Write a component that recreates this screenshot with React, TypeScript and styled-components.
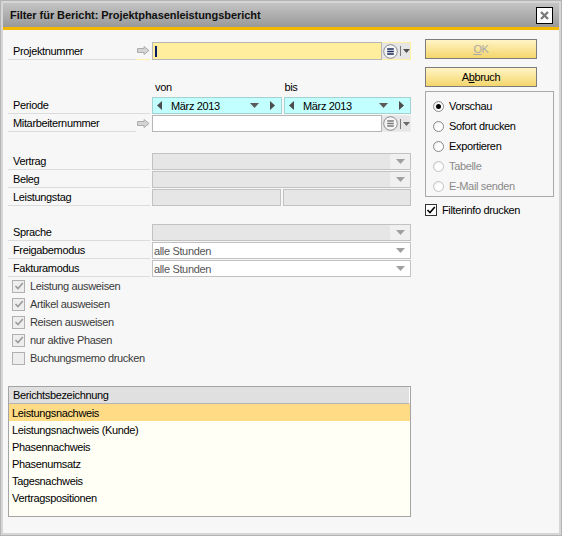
import React from "react";
import styled, { createGlobalStyle } from "styled-components";

const Global = createGlobalStyle`
  html, body { margin: 0; padding: 0; background: #ffffff; }
  body {
    font-family: "Liberation Sans", Arial, sans-serif;
    font-size: 11px;
    letter-spacing: -0.35px;
    color: #000;
  }
  * { box-sizing: border-box; }
`;

const Frame = styled.div`
  width: 562px;
  height: 536px;
  border: 1px solid #b4b4b4;
  padding: 2px;
  background: #d6d6d6;
  display: flex;
  flex-direction: column;
`;

const TitleBar = styled.div`
  flex: none;
  height: 27px;
  background: linear-gradient(#c4c4c4, #999999);
  border-bottom: 3px solid #f5b800;
  display: flex;
  align-items: center;
  justify-content: space-between;
  padding: 0 6px 0 7px;
`;

const Title = styled.div`
  font-weight: bold;
  font-size: 11px;
  letter-spacing: -0.05px;
  color: #101010;
`;

const CloseButton = styled.div`
  width: 17px;
  height: 17px;
  border: 1px solid #000;
  background: #fff;
  display: flex;
  align-items: center;
  justify-content: center;
`;

const Body = styled.div`
  flex: 1;
  background: #f7f7f7;
  display: flex;
  gap: 14px;
  padding: 0 5px;
`;

const LeftColumn = styled.div`
  width: 403px;
  padding-top: 12px;
  display: flex;
  flex-direction: column;
`;

const RightColumn = styled.div`
  width: 129px;
  padding-top: 9px;
  display: flex;
  flex-direction: column;
`;

const FormRow = styled.div<{ $h?: number; $mt?: number }>`
  display: grid;
  grid-template-columns: 144px 1fr;
  height: ${(p) => p.$h ?? 17}px;
  margin-top: ${(p) => p.$mt ?? 0}px;
`;

const LabelCell = styled.div`
  display: flex;
  align-items: stretch;
  padding-right: 2px;
`;

const Label = styled.div`
  flex: 1;
  display: flex;
  align-items: center;
  padding-left: 5px;
  border-bottom: 1px solid #dcdcdc;
  white-space: nowrap;
`;

const ArrowSlot = styled.div<{ $line: string }>`
  width: 14px;
  display: flex;
  align-items: center;
  justify-content: center;
  border-bottom: 1px solid ${(p) => p.$line};
`;

const Lookup = styled.div<{ $focus?: boolean }>`
  display: flex;
  height: 100%;
  background: ${(p) => (p.$focus ? "#fff2ae" : "transparent")};
`;

const TextField = styled.div<{ $bg: string }>`
  flex: 1;
  height: 100%;
  border: 1px solid #b6b6b6;
  background: ${(p) => p.$bg};
  display: flex;
  align-items: center;
  padding-left: 2px;
`;

const Caret = styled.span`
  width: 2px;
  height: 11px;
  background: #0b1a66;
`;

const LookupButtons = styled.div<{ $focus?: boolean }>`
  width: 29px;
  height: 100%;
  display: flex;
  align-items: center;
  gap: 2px;
  padding-left: 1px;
  background: #e6e6e6;
  border: 1px solid ${(p) => (p.$focus ? "#fff0a0" : "#ececec")};
  border-left: none;
`;

const Sep = styled.span`
  width: 1px;
  height: 10px;
  background: #7a7a7a;
`;

const HeaderRow = styled.div`
  display: grid;
  grid-template-columns: 144px 1fr 1fr;
  column-gap: 2px;
  height: 16px;
  margin-top: 19px;
  align-items: center;
`;

const HeaderText = styled.div`
  padding-left: 1px;
`;

const DatePair = styled.div`
  display: grid;
  grid-template-columns: 130px 1fr;
  gap: 2px;
  height: 100%;
`;

const DateBox = styled.div`
  height: 100%;
  border: 1px solid #a4d2d2;
  background: #c2ffff;
  display: flex;
  align-items: center;
  padding: 0 6px 0 4px;
`;

const DateText = styled.span`
  margin-left: 9px;
  flex: 1;
`;

const Spacer = styled.span`
  width: 11px;
`;

const Select = styled.div<{ $bg: string }>`
  height: 100%;
  border: 1px solid #c2c2c2;
  background: ${(p) => p.$bg};
  display: flex;
  align-items: center;
`;

const SelectText = styled.span`
  flex: 1;
  padding-left: 1px;
  color: #555;
`;

const SelectArrow = styled.span<{ $bg: string }>`
  width: 20px;
  height: 100%;
  background: ${(p) => p.$bg};
  display: flex;
  align-items: center;
  justify-content: center;
`;

const BoxPair = styled.div`
  display: grid;
  grid-template-columns: 129px 1fr;
  gap: 2px;
  height: 100%;
`;

const GrayBox = styled.div`
  border: 1px solid #c2c2c2;
  background: #e6e6e6;
  height: 100%;
`;

const CheckRow = styled.div`
  height: 18px;
  display: flex;
  align-items: center;
  padding-left: 4px;
  gap: 5px;
  color: #3a3a3a;
`;

const CheckBox = styled.span<{ $dark?: boolean; $size: number }>`
  width: ${(p) => p.$size}px;
  height: ${(p) => p.$size}px;
  border: 1px solid ${(p) => (p.$dark ? "#333" : "#b0b0b0")};
  background: ${(p) => (p.$dark ? "#fff" : "#eeeeee")};
  display: flex;
  align-items: center;
  justify-content: center;
  flex: none;
`;

const Table = styled.div`
  margin-top: 19px;
  height: 131px;
  border: 1px solid #a4a4a4;
  background: #fffff5;
  display: flex;
  flex-direction: column;
`;

const TableHeader = styled.div`
  height: 17px;
  background: #e0e0e0;
  border-bottom: 1px solid #b4b4b4;
  border-right: 1px solid #ffffff;
  display: flex;
  align-items: center;
  padding-left: 4px;
  flex: none;
`;

const TableRow = styled.div<{ $sel?: boolean }>`
  height: 17px;
  display: flex;
  align-items: center;
  padding-left: 3px;
  background: ${(p) => (p.$sel ? "#fedb84" : "transparent")};
  flex: none;
`;

const Button = styled.div<{ $mt: number; $disabled?: boolean }>`
  width: 112px;
  height: 20px;
  margin-top: ${(p) => p.$mt}px;
  border: 1px solid #7c7c7c;
  background: linear-gradient(#fff5c6, #f5d66c);
  display: flex;
  align-items: center;
  justify-content: center;
  color: ${(p) => (p.$disabled ? "#a8a8a8" : "#000")};
`;

const RadioGroup = styled.div`
  margin-top: 4px;
  border: 1px solid #a8a8a8;
  padding: 4px 0 0 7px;
  display: flex;
  flex-direction: column;
`;

const RadioItem = styled.div<{ $disabled?: boolean }>`
  height: 20px;
  display: flex;
  align-items: center;
  gap: 5px;
  color: ${(p) => (p.$disabled ? "#8a8a8a" : "#000")};
`;

const RadioCircle = styled.span<{ $disabled?: boolean }>`
  width: 11px;
  height: 11px;
  border-radius: 50%;
  border: 1px solid ${(p) => (p.$disabled ? "#c4c4c4" : "#8a8a8a")};
  background: radial-gradient(circle at 60% 60%, #ffffff 40%, #e4e4e4 100%);
  display: flex;
  align-items: center;
  justify-content: center;
  flex: none;
`;

const RadioDot = styled.span`
  width: 5px;
  height: 5px;
  border-radius: 50%;
  background: #000;
`;

const FilterInfo = styled.div`
  margin-top: 6px;
  height: 14px;
  display: flex;
  align-items: center;
  gap: 5px;
`;

const InputArrow = () => (
  <svg width="13" height="9" viewBox="0 0 13 9">
    <path d="M0.5 2.5 H7 V0.5 L12 4.5 L7 8.5 V6.5 H0.5 Z" fill="#d4d4d4" stroke="#acacac" />
  </svg>
);

const ListIcon = ({ color }: { color: string }) => (
  <svg width="15" height="15" viewBox="0 0 15 15">
    <circle cx="7.5" cy="7.5" r="6.8" fill="#f6f6f6" stroke="#8c8c8c" />
    <path d="M4.2 5 H10.8 M4.2 7.5 H10.8 M4.2 10 H10.8" stroke={color} strokeWidth="1.3" />
  </svg>
);

const Down = ({ color, w = 9, h = 5 }: { color: string; w?: number; h?: number }) => (
  <svg width={w} height={h} viewBox={`0 0 ${w} ${h}`}>
    <path d={`M0 0 H${w} L${w / 2} ${h} Z`} fill={color} />
  </svg>
);

const LeftTri = () => (
  <svg width="5" height="9" viewBox="0 0 5 9">
    <path d="M5 0 V9 L0 4.5 Z" fill="#4c4c4c" />
  </svg>
);

const RightTri = () => (
  <svg width="5" height="9" viewBox="0 0 5 9">
    <path d="M0 0 V9 L5 4.5 Z" fill="#4c4c4c" />
  </svg>
);

const Check = ({ color }: { color: string }) => (
  <svg width="10" height="10" viewBox="0 0 10 10">
    <path d="M1.5 5 L4 7.5 L8.8 2" fill="none" stroke={color} strokeWidth="1.6" />
  </svg>
);

const CloseX = () => (
  <svg width="11" height="11" viewBox="0 0 11 11">
    <path d="M2 2 L9 9 M9 2 L2 9" stroke="#7a7a7a" strokeWidth="2.4" />
  </svg>
);

const DateField = () => (
  <DateBox>
    <LeftTri />
    <DateText>März 2013</DateText>
    <Down color="#5a5a5a" />
    <Spacer />
    <RightTri />
  </DateBox>
);

const checks = [
  { label: "Leistung ausweisen", on: true },
  { label: "Artikel ausweisen", on: true },
  { label: "Reisen ausweisen", on: true },
  { label: "nur aktive Phasen", on: true },
  { label: "Buchungsmemo drucken", on: false },
];

const reports = [
  "Leistungsnachweis",
  "Leistungsnachweis (Kunde)",
  "Phasennachweis",
  "Phasenumsatz",
  "Tagesnachweis",
  "Vertragspositionen",
];

const radios = [
  { label: "Vorschau", on: true, disabled: false },
  { label: "Sofort drucken", on: false, disabled: false },
  { label: "Exportieren", on: false, disabled: false },
  { label: "Tabelle", on: false, disabled: true },
  { label: "E-Mail senden", on: false, disabled: true },
];

const SelectField = ({ label, text, enabled }: { label: string; text?: string; enabled?: boolean }) => (
  <FormRow $mt={1}>
    <LabelCell>
      <Label>{label}</Label>
      <ArrowSlot $line="#dcdcdc" />
    </LabelCell>
    <Select $bg={enabled ? "#ffffff" : "#e6e6e6"}>
      <SelectText>{text}</SelectText>
      <SelectArrow $bg={enabled ? "#ffffff" : "#f0f0f0"}>
        <Down color="#a0a0a0" />
      </SelectArrow>
    </Select>
  </FormRow>
);

export default function App() {
  return (
    <>
      <Global />
      <Frame>
        <TitleBar>
          <Title>Filter für Bericht: Projektphasenleistungsbericht</Title>
          <CloseButton>
            <CloseX />
          </CloseButton>
        </TitleBar>
        <Body>
          <LeftColumn>
            <FormRow $h={18}>
              <LabelCell>
                <Label>Projektnummer</Label>
                <ArrowSlot $line="#fff0a6">
                  <InputArrow />
                </ArrowSlot>
              </LabelCell>
              <Lookup $focus>
                <TextField $bg="#ffee9e">
                  <Caret />
                </TextField>
                <LookupButtons $focus>
                  <ListIcon color="#1a2a5a" />
                  <Sep />
                  <Down color="#505050" w={7} h={4} />
                </LookupButtons>
              </Lookup>
            </FormRow>

            <HeaderRow>
              <span />
              <HeaderText>von</HeaderText>
              <HeaderText>bis</HeaderText>
            </HeaderRow>

            <FormRow $mt={2}>
              <LabelCell>
                <Label>Periode</Label>
                <ArrowSlot $line="#dcdcdc" />
              </LabelCell>
              <DatePair>
                <DateField />
                <DateField />
              </DatePair>
            </FormRow>

            <FormRow $mt={1}>
              <LabelCell>
                <Label>Mitarbeiternummer</Label>
                <ArrowSlot $line="#f7f7f7">
                  <InputArrow />
                </ArrowSlot>
              </LabelCell>
              <Lookup>
                <TextField $bg="#ffffff" />
                <LookupButtons>
                  <ListIcon color="#7a7a7a" />
                  <Sep />
                  <Down color="#6a6a6a" w={7} h={4} />
                </LookupButtons>
              </Lookup>
            </FormRow>

            <FormRow $mt={21}>
              <LabelCell>
                <Label>Vertrag</Label>
                <ArrowSlot $line="#dcdcdc" />
              </LabelCell>
              <Select $bg="#e6e6e6">
                <SelectText />
                <SelectArrow $bg="#f0f0f0">
                  <Down color="#a0a0a0" />
                </SelectArrow>
              </Select>
            </FormRow>
            <SelectField label="Beleg" />
            <FormRow $mt={1}>
              <LabelCell>
                <Label>Leistungstag</Label>
                <ArrowSlot $line="#dcdcdc" />
              </LabelCell>
              <BoxPair>
                <GrayBox />
                <GrayBox />
              </BoxPair>
            </FormRow>

            <FormRow $mt={18}>
              <LabelCell>
                <Label>Sprache</Label>
                <ArrowSlot $line="#dcdcdc" />
              </LabelCell>
              <Select $bg="#e6e6e6">
                <SelectText />
                <SelectArrow $bg="#f0f0f0">
                  <Down color="#a0a0a0" />
                </SelectArrow>
              </Select>
            </FormRow>
            <SelectField label="Freigabemodus" text="alle Stunden" enabled />
            <SelectField label="Fakturamodus" text="alle Stunden" enabled />

            {checks.map((c) => (
              <CheckRow key={c.label}>
                <CheckBox $size={13}>{c.on && <Check color="#9a9a9a" />}</CheckBox>
                {c.label}
              </CheckRow>
            ))}

            <Table>
              <TableHeader>Berichtsbezeichnung</TableHeader>
              {reports.map((r, i) => (
                <TableRow key={r} $sel={i === 0}>
                  {r}
                </TableRow>
              ))}
            </Table>
          </LeftColumn>

          <RightColumn>
            <Button $mt={0} $disabled>
              <u>O</u>K
            </Button>
            <Button $mt={8}>
              A<u>b</u>bruch
            </Button>
            <RadioGroup>
              {radios.map((r) => (
                <RadioItem key={r.label} $disabled={r.disabled}>
                  <RadioCircle $disabled={r.disabled}>{r.on && <RadioDot />}</RadioCircle>
                  {r.label}
                </RadioItem>
              ))}
            </RadioGroup>
            <FilterInfo>
              <CheckBox $size={12} $dark>
                <Check color="#000" />
              </CheckBox>
              Filterinfo drucken
            </FilterInfo>
          </RightColumn>
        </Body>
      </Frame>
    </>
  );
}
